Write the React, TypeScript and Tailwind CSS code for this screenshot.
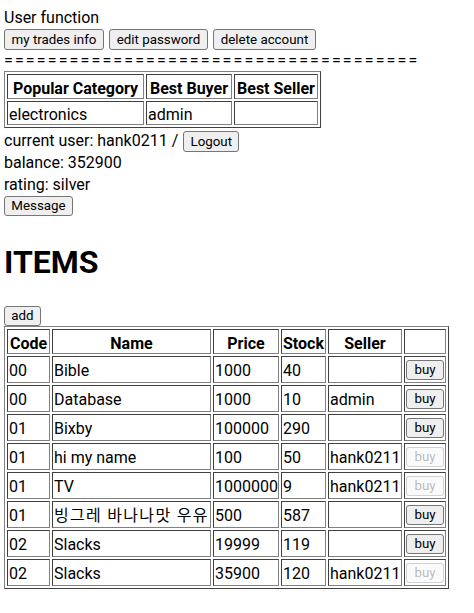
import React from 'react';

type Item = { code: string; name: string; price: string; stock: string; seller: string; own: boolean };

const items: Item[] = [
  { code: '00', name: 'Bible', price: '1000', stock: '40', seller: '', own: false },
  { code: '00', name: 'Database', price: '1000', stock: '10', seller: 'admin', own: false },
  { code: '01', name: 'Bixby', price: '100000', stock: '290', seller: '', own: false },
  { code: '01', name: 'hi my name', price: '100', stock: '50', seller: 'hank0211', own: true },
  { code: '01', name: 'TV', price: '1000000', stock: '9', seller: 'hank0211', own: true },
  { code: '01', name: '빙그레 바나나맛 우유', price: '500', stock: '587', seller: '', own: false },
  { code: '02', name: 'Slacks', price: '19999', stock: '119', seller: '', own: false },
  { code: '02', name: 'Slacks', price: '35900', stock: '120', seller: 'hank0211', own: true },
];

const btn =
  'bg-[#efefef] border border-[#767676] rounded-[3px] text-[13.33px] leading-[16px] text-black text-center whitespace-nowrap';
const btnOff =
  'bg-[#efefef]/30 border border-[#767676]/30 rounded-[3px] text-[13.33px] leading-[16px] text-[#101010]/30 text-center whitespace-nowrap';
const table =
  'table-fixed border-separate border-spacing-[2px] border border-t-[#808080] border-l-[#808080] border-b-[#404040] border-r-[#404040]';
const edge = 'border border-t-[#404040] border-l-[#404040] border-b-[#808080] border-r-[#808080] whitespace-nowrap overflow-visible';
// text cells: text sits a little low, as in the original
const cell = `${edge} px-[1px] pt-[3px] pb-0 leading-[19px]`;
const dcell = `${edge} px-[1px] pt-[3px] pb-[1px] leading-[20px] h-[27px]`;

export default function App() {
  return (
    <div className="min-h-[613px] bg-white text-black text-[16px] leading-[21px] pl-[4px] pt-[7px] font-[Roboto,'Noto_Sans_CJK_KR',sans-serif]">
      <div>User function</div>
      <div className="flex gap-[5px] mt-[1px]">
        <button className={`${btn} w-[100px] h-[21px]`}>my trades info</button>
        <button className={`${btn} w-[99px] h-[21px]`}>edit password</button>
        <button className={`${btn} w-[103px] h-[21px]`}>delete account</button>
      </div>
      <div className="tracking-[2.15px] whitespace-nowrap">{'='.repeat(38)}</div>

      <table className={`${table} w-[317px]`}>
        <thead>
          <tr>
            <th className={`${cell} w-[137px] h-[25px] font-bold`}>Popular Category</th>
            <th className={`${cell} w-[86px] h-[25px] font-bold`}>Best Buyer</th>
            <th className={`${cell} w-[84px] h-[25px] font-bold`}>Best Seller</th>
          </tr>
        </thead>
        <tbody>
          <tr>
            <td className={`${cell} h-[24px]`}>electronics</td>
            <td className={`${cell} h-[24px]`}>admin</td>
            <td className={`${cell} h-[24px]`}></td>
          </tr>
        </tbody>
      </table>

      <div className="flex h-[24px] gap-[5px]">
        <span className="self-center">current user: hank0211 /</span>
        <button className={`${btn} self-end w-[56px] h-[21px]`}>Logout</button>
      </div>
      <div className="leading-[22px]">balance: 352900</div>
      <div className="leading-[22px]">rating: silver</div>
      <button className={`${btn} w-[69px] h-[20px] block`}>Message</button>

      <h1 className="text-[32px] leading-[40px] font-bold mt-[26px] mb-[24px]">ITEMS</h1>

      <button className={`${btn} w-[37px] h-[20px] block`}>add</button>
      <table className={`${table} w-[445px]`}>
        <thead>
          <tr>
            <th className={`${cell} w-[43px] h-[25px] font-bold`}>Code</th>
            <th className={`${cell} w-[159px] h-[25px] font-bold`}>Name</th>
            <th className={`${cell} w-[66px] h-[25px] font-bold`}>Price</th>
            <th className={`${cell} w-[45px] h-[25px] font-bold`}>Stock</th>
            <th className={`${cell} w-[74px] h-[25px] font-bold`}>Seller</th>
            <th className={`${cell} w-[42px] h-[25px]`}></th>
          </tr>
        </thead>
        <tbody>
          {items.map((it, i) => (
            <tr key={i}>
              <td className={dcell}>{it.code}</td>
              <td className={dcell}>
                {/[가-힣]/.test(it.name) ? <span className="tracking-[1.3px]">{it.name}</span> : it.name}
              </td>
              <td className={dcell}>{it.price}</td>
              <td className={dcell}>{it.stock}</td>
              <td className={dcell}>{it.seller}</td>
              <td className={`${edge} p-[1px] h-[27px]`}>
                <button disabled={it.own} className={`${it.own ? btnOff : btn} w-[38px] h-[20px] block`}>
                  buy
                </button>
              </td>
            </tr>
          ))}
        </tbody>
      </table>
    </div>
  );
}
